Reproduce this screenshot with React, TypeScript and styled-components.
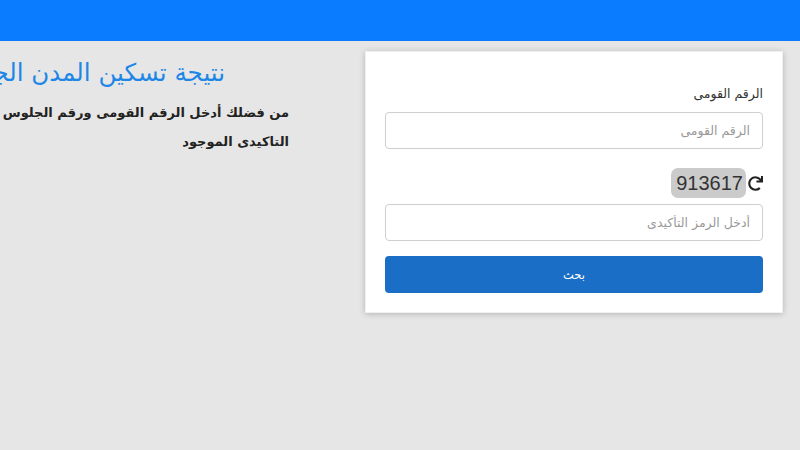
import React, { useState } from 'react'
import styled, { createGlobalStyle } from 'styled-components'
import { FaRedo } from 'react-icons/fa'

const GlobalStyle = createGlobalStyle`
  html, body {
    margin: 0;
    padding: 0;
    height: 100%;
    overflow: hidden;
  }
  body {
    background: #e6e6e6;
    font-family: "DejaVu Sans", "Noto Sans", sans-serif;
  }
`

const Page = styled.div`
  direction: rtl;
  width: 800px;
  height: 450px;
  overflow: hidden;
  background: #e6e6e6;
`

const TopBar = styled.div`
  height: 41px;
  background: #0a7cff;
`

const Main = styled.div`
  display: flex;
  align-items: flex-start;
  padding: 10px 17px 0 0;
  gap: 76px;
`

const Card = styled.div`
  flex: 0 0 418px;
  box-sizing: border-box;
  background: #fff;
  border: 1px solid #f0f0f0;
  box-shadow: 0 1px 6px rgba(0, 0, 0, 0.22);
  padding: 34px 19px 19px;
`

const Label = styled.label`
  display: block;
  font-size: 12.5px;
  color: #333;
  margin-bottom: 11px;
`

const Input = styled.input`
  display: block;
  width: 100%;
  box-sizing: border-box;
  height: 37px;
  border: 1px solid #cfcfcf;
  border-radius: 4px;
  padding: 0 12px;
  font-family: "DejaVu Sans", sans-serif;
  font-size: 12.5px;
  color: #555;
  outline: none;
  &::placeholder {
    color: #9a9a9a;
  }
`

const CaptchaRow = styled.div`
  display: flex;
  align-items: center;
  gap: 2px;
  margin: 19px 0 6px;
`

const RefreshBtn = styled.span`
  display: flex;
  align-items: center;
  color: #222;
  font-size: 15px;
  cursor: pointer;
`

const CaptchaCode = styled.span`
  direction: ltr;
  background: #cbcbcb;
  border-radius: 7px;
  padding: 3px 3px 3px 5px;
  font-family: "Liberation Sans", Arial, sans-serif;
  font-size: 20px;
  color: #333;
  line-height: 24px;
`

const SearchButton = styled.button`
  display: block;
  width: 100%;
  height: 37px;
  margin-top: 15px;
  border: none;
  border-radius: 4px;
  background: #1b6ec5;
  color: #fff;
  font-family: "DejaVu Sans", sans-serif;
  font-size: 11.5px;
  cursor: pointer;
`

const Intro = styled.div`
  flex: 0 0 360px;
  padding-top: 6px;
`

const Heading = styled.h1`
  margin: 0 64px 0 0;
  font-size: 24.5px;
  font-weight: normal;
  color: #1e87e6;
  white-space: nowrap;
  line-height: 32px;
`

const Lead = styled.p`
  margin: 9px 0 0;
  font-size: 13px;
  font-weight: bold;
  color: #222;
  line-height: 29px;
`

export default function App() {
  const [code] = useState('913617')
  return (
    <Page>
      <GlobalStyle />
      <TopBar />
      <Main>
        <Card>
          <Label>الرقم القومى</Label>
          <Input placeholder="الرقم القومى" />
          <CaptchaRow>
            <RefreshBtn>
              <FaRedo />
            </RefreshBtn>
            <CaptchaCode>{code}</CaptchaCode>
          </CaptchaRow>
          <Input placeholder="أدخل الرمز التأكيدى" />
          <SearchButton>بحث</SearchButton>
        </Card>
        <Intro>
          <Heading>نتيجة تسكين المدن الجامعية</Heading>
          <Lead>من فضلك أدخل الرقم القومى ورقم الجلوس والرمز التاكيدى الموجود</Lead>
        </Intro>
      </Main>
    </Page>
  )
}
